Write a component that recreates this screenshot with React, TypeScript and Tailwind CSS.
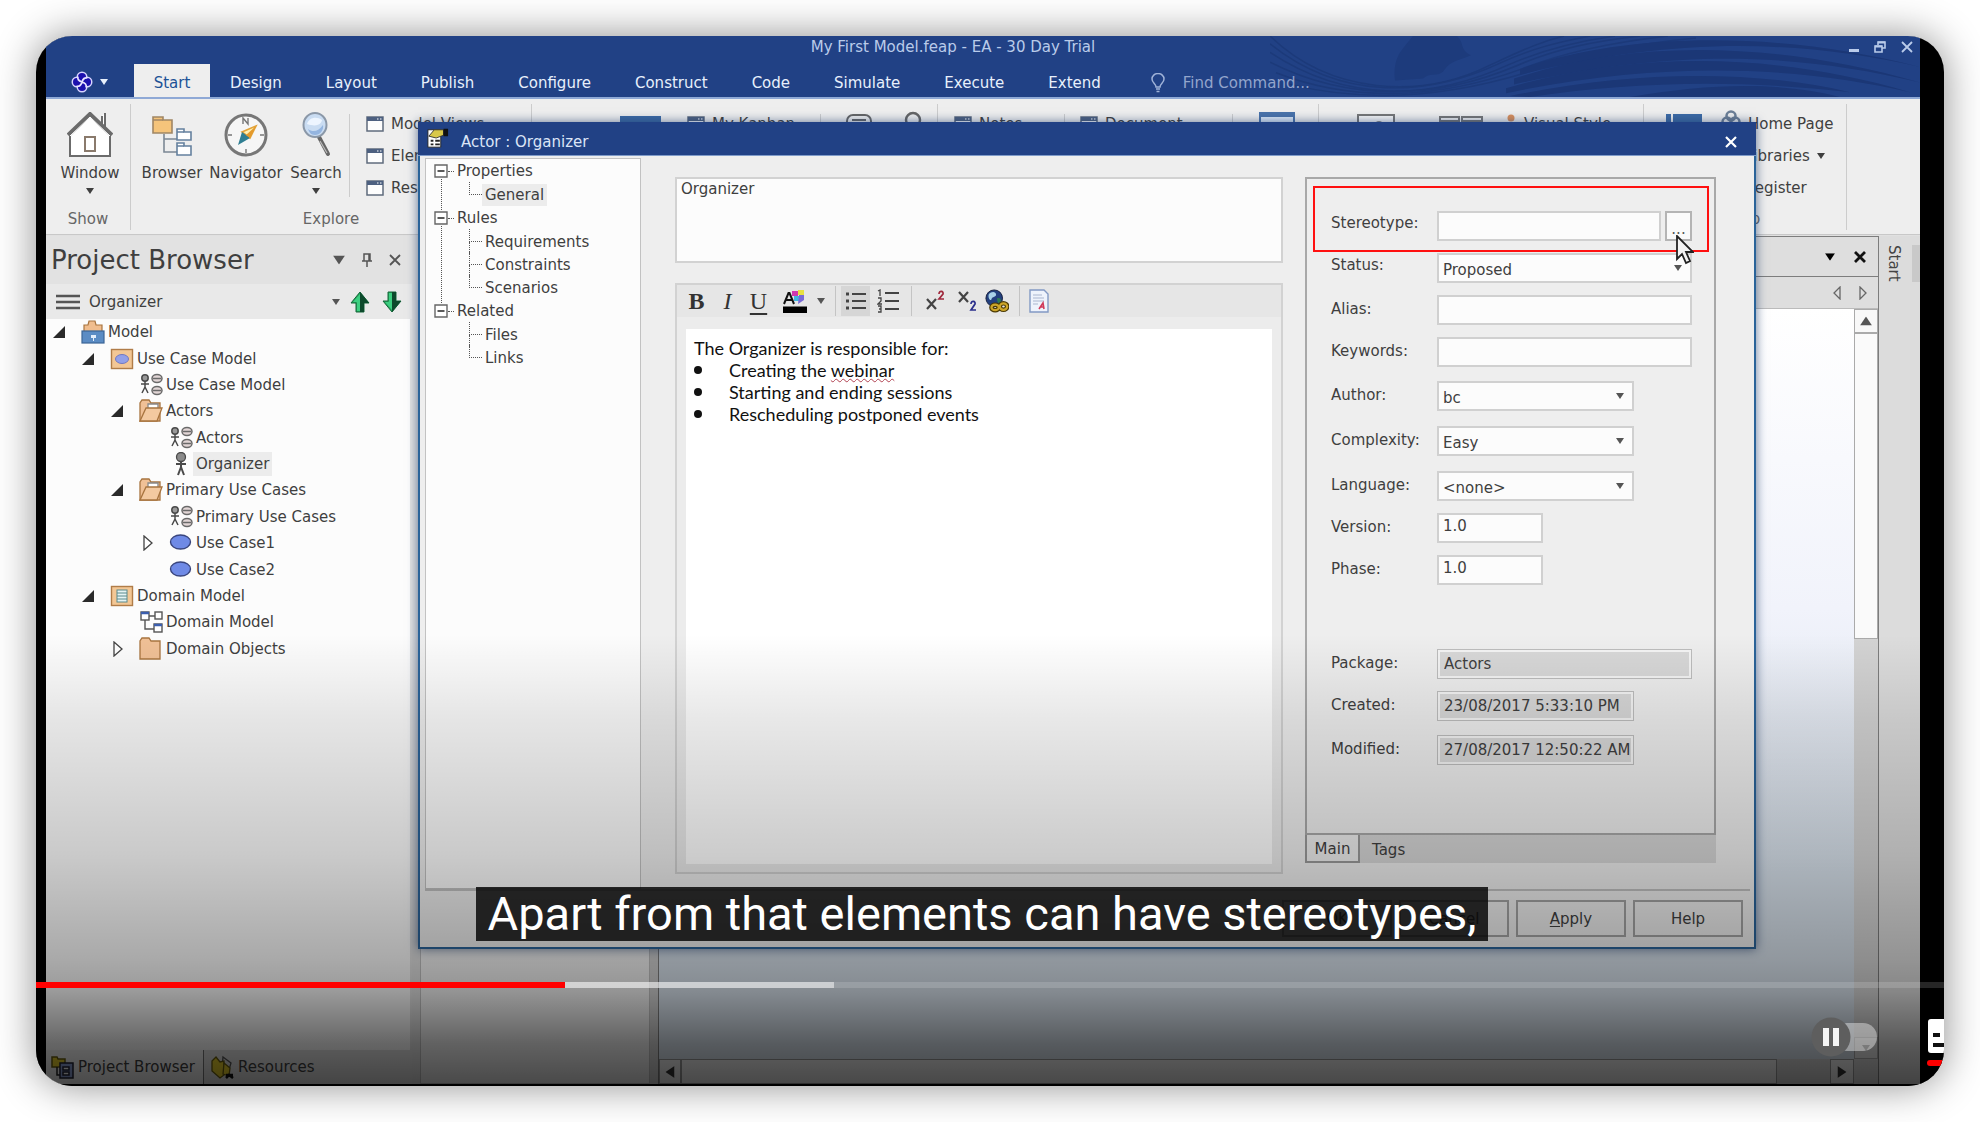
import React from "react";

/* ---------- small glyphs ---------- */

const Down = ({ className = "" }: { className?: string }) => (
  <svg viewBox="0 0 8 6" className={"h-[6px] w-[8px] shrink-0 " + className} fill="currentColor">
    <path d="M0 0h8L4 6z" />
  </svg>
);

const MiniWindow = () => (
  <svg viewBox="0 0 18 16" className="h-4 w-[18px] shrink-0">
    <rect x="1" y="1" width="16" height="14" fill="#fdfdfd" stroke="#5f6b7c" strokeWidth="1.5" />
    <rect x="1" y="1" width="16" height="4" fill="#4d6080" />
    <path d="M11 3h1.5M14 3h1.5" stroke="#fff" strokeWidth="1.2" />
  </svg>
);

const Logo = () => (
  <svg viewBox="0 0 24 24" className="h-6 w-6">
    <g fill="#d8d4ff">
      <circle cx="12" cy="7" r="5.500" />
      <circle cx="17" cy="12" r="5.500" />
      <circle cx="12" cy="17" r="5.500" />
      <circle cx="7" cy="12" r="5.500" />
    </g>
    <g fill="#1c0fae">
      <circle cx="12" cy="7" r="4" />
      <circle cx="17" cy="12" r="4" />
      <circle cx="12" cy="17" r="4" />
      <circle cx="7" cy="12" r="4" />
      <circle cx="12" cy="12" r="4" />
    </g>
    <path d="M8 6.500c-1 3 1 4.500 4 5.500s5 2.500 4 5.500M17.500 8c-3-1-4.500 1-5.500 4s-2.500 5-5.500 4" stroke="#e6e3ff" strokeWidth="1.700" fill="none" />
  </svg>
);

const House = () => (
  <svg viewBox="0 0 46 46" className="h-[46px] w-[46px]" stroke="#6b6b6b" strokeWidth="2">
    <path d="M38 1v18h-3V4" fill="#fff" />
    <path d="M3 23v21h40V23L23 4z" fill="#fff" />
    <path d="M1 23L23 2l22 21" fill="none" strokeWidth="4" />
    <path d="M3 24L23 5l20 19" fill="none" stroke="#fff" strokeWidth="1" />
    <rect x="18" y="25" width="10" height="14" fill="#fff" stroke="#8a7a6c" />
  </svg>
);

const BrowserIcon = () => (
  <svg viewBox="0 0 40 42" className="h-[42px] w-10" strokeWidth="1.6">
    <path d="M12 20v18h13M12 25h13" fill="none" stroke="#7b8794" />
    <path d="M1 3h10v3h9v13H1z" fill="#f5c47b" stroke="#a08664" />
    <path d="M1 6h10" stroke="#a08664" />
    <path d="M25 15h7v3h7v8H25zM25 29h7v3h7v9H25z" fill="#fff" stroke="#64809e" />
    <path d="M25 18h7M25 32h7" stroke="#64809e" />
  </svg>
);

const Compass = () => (
  <svg viewBox="0 0 44 44" className="h-11 w-11">
    <circle cx="22" cy="22" r="20" fill="#f6f6f6" stroke="#777" strokeWidth="3" />
    <path d="M19 11V5l5 6V5M22 36v4M4 22h4M36 22h4" stroke="#777" strokeWidth="1.4" fill="none" />
    <path d="M32 13L18 19l8 6z" fill="#fff0b0" stroke="#e2a33a" strokeWidth="1.6" />
    <path d="M14 32l4-13 8 6z" fill="#2f7e92" />
    <path d="M32 13l-10 9 4 3z" fill="#e59a2c" />
  </svg>
);

const Magnifier = () => (
  <svg viewBox="0 0 30 46" className="h-[46px] w-[30px]">
    <path d="M18 25l9 17" stroke="#666" strokeWidth="4" strokeLinecap="round" />
    <path d="M19 29l7 12" stroke="#bbb" strokeWidth="1.2" />
    <ellipse cx="14" cy="13" rx="11.500" ry="12" fill="#c9dcf2" stroke="#8b98a8" strokeWidth="2" />
    <path d="M6 12c2-7 10-8 15-4-1 5-6 7-15 4z" fill="#edf5ff" />
    <path d="M7 17c5 4 11 2 15-4 1 5-3 10-8 10-4 0-6-3-7-6z" fill="#94b5e0" />
  </svg>
);

const Waves = () => (
  <svg viewBox="0 0 650 63" preserveAspectRatio="none" className="absolute inset-y-0 right-0 h-full w-[650px]" fill="none">
    <path d="M125 46c-2-20 4-28 10-36l8-10h44c8 8 2 14 14 20-14 6-20 6-26 14-6 10-14 2-22 10z" fill="#1d3b7c" />
    <g stroke="#1c3a7a" strokeWidth="1.500">
      <path d="M0 0c60 60 150 66 220 30 34-16 50-24 74-30" />
      <path d="M0 8c70 58 155 56 230 20 34-16 60-22 90-28" />
      <path d="M0 17c76 52 160 50 240 12 36-16 70-24 105-29" />
      <path d="M0 27c80 42 168 38 246 4 40-18 80-26 124-31" />
      <path d="M6 38c80 32 166 26 246-4 44-18 94-28 146-34" />
      <path d="M20 50c80 20 160 12 236-12 60-20 110-30 170-36" />
    </g>
    <g fill="#1b3776">
      <path d="M250 34C350-2 500-8 650 32 520 2 400 2 250 40z" />
      <path d="M244 44C360 4 500 4 650 48 520 16 400 14 244 50z" />
      <path d="M236 54C370 14 510 18 640 58 520 30 390 26 236 59z" />
      <path d="M240 62c120-26 240-28 340-4-120-14-220-10-320 5z" />
      <path d="M360 63c80-14 150-16 210 0z" />
    </g>
  </svg>
);

/* ---------- tree icons ---------- */

const Folder = ({ open = false }: { open?: boolean }) => (
  <svg viewBox="0 0 24 24" className="h-6 w-6" stroke="#a8743f" strokeWidth="1.3">
    <path d="M1 22V4l2-3h7l2 3h9v18z" fill="#f0c096" />
    {open && <path d="M9 5h10v8H9z" fill="#fff" stroke="#888" />}
    {open && <path d="M1 22L7 9h16l-5 13z" fill="#f3c9a0" />}
  </svg>
);

const ModelIcon = () => (
  <svg viewBox="0 0 24 24" className="h-6 w-6" strokeWidth="1.2">
    <path d="M3 12V5h4l1-4h6l1 4h6v7z" fill="#f0bd8e" stroke="#a8743f" />
    <rect x="1" y="11" width="22" height="12" fill="#5b8cc4" stroke="#3b6596" />
    <path d="M10 15h5v3h-2v3h-1v-3h-2z" fill="#e3eefb" />
  </svg>
);

const PackageIcon = ({ kind }: { kind: "use" | "class" }) => (
  <svg viewBox="0 0 24 24" className="h-6 w-6">
    <rect x="1.500" y="2.500" width="21" height="19" fill="#f3c795" stroke="#b07c48" strokeWidth="1.4" />
    {kind === "use" ? (
      <ellipse cx="12" cy="12" rx="6.500" ry="4.500" fill="#93a0e8" stroke="#7379c0" />
    ) : (
      <g stroke="#5a8a8c">
        <rect x="7" y="6" width="10" height="12" fill="#e5f3f3" />
        <path d="M7 9h10M7 12h10M7 15h10" />
      </g>
    )}
  </svg>
);

const DiagramIcon = () => (
  <svg viewBox="0 0 24 24" className="h-6 w-6" stroke="#4a4a4a" strokeWidth="1.5">
    <circle cx="6" cy="5" r="3.200" fill="#999" />
    <path d="M6 8v7M2 11h8M6 14l-3 6M6 14l3 6" fill="none" />
    <g fill="#e2d6d6" stroke="#6a6a6a">
      <ellipse cx="18" cy="5.500" rx="5" ry="4" />
      <ellipse cx="18" cy="17.500" rx="5" ry="4" />
      <path d="M14 5.500h8M14 17.500h8" />
    </g>
  </svg>
);

const ActorIcon = () => (
  <svg viewBox="0 0 24 24" className="h-6 w-6" stroke="#4a4a4a" strokeWidth="2">
    <circle cx="12" cy="5" r="4.500" fill="#8a8a8a" strokeWidth="1.300" />
    <path d="M12 9v7M7 12h10M12 15l-3 8M12 15l3 8" fill="none" />
  </svg>
);

const UseCaseIcon = () => (
  <svg viewBox="0 0 24 24" className="h-6 w-6">
    <ellipse cx="11.500" cy="11" rx="10" ry="7" fill="#6f8ae6" stroke="#39457e" strokeWidth="1.4" />
  </svg>
);

const ClassDiagramIcon = () => (
  <svg viewBox="0 0 24 24" className="h-6 w-6" stroke="#555" strokeWidth="1.400" fill="#fff">
    <path d="M6 8v11h9M10 6h6" fill="none" />
    <rect x="2" y="2" width="8" height="8" />
    <rect x="16" y="2" width="7" height="7" />
    <rect x="15" y="14" width="8" height="8" />
    <path d="M2 3h8M15 15h8" stroke="#3c5fae" strokeWidth="2.500" />
  </svg>
);

type Node = { level: 0 | 1 | 2 | 3; state?: "open" | "closed"; icon: React.ReactNode; text: string; selected?: boolean };

const nodes: Node[] = [
  { level: 0, state: "open", icon: <ModelIcon />, text: "Model" },
  { level: 1, state: "open", icon: <PackageIcon kind="use" />, text: "Use Case Model" },
  { level: 2, icon: <DiagramIcon />, text: "Use Case Model" },
  { level: 2, state: "open", icon: <Folder open />, text: "Actors" },
  { level: 3, icon: <DiagramIcon />, text: "Actors" },
  { level: 3, icon: <ActorIcon />, text: "Organizer", selected: true },
  { level: 2, state: "open", icon: <Folder open />, text: "Primary Use Cases" },
  { level: 3, icon: <DiagramIcon />, text: "Primary Use Cases" },
  { level: 3, state: "closed", icon: <UseCaseIcon />, text: "Use Case1" },
  { level: 3, icon: <UseCaseIcon />, text: "Use Case2" },
  { level: 1, state: "open", icon: <PackageIcon kind="class" />, text: "Domain Model" },
  { level: 2, icon: <ClassDiagramIcon />, text: "Domain Model" },
  { level: 2, state: "closed", icon: <Folder />, text: "Domain Objects" },
];

const indents = ["pl-[7px]", "pl-[36px]", "pl-[65px]", "pl-[95px]"];

/* ---------- application header ---------- */

const tabs = ["Design", "Layout", "Publish", "Configure", "Construct", "Code", "Simulate", "Execute", "Extend"];

const Header = () => (
  <header className="relative h-[63px] shrink-0 overflow-hidden border-b-2 border-[#8fa9d6] bg-[#214185]">
    <Waves />
    <div className="relative flex h-7 items-start text-[#b9cbea]">
      <h1 className="flex-1 pl-5 text-center leading-[22px]">My First Model.feap - EA - 30 Day Trial</h1>
      <div className="flex h-[22px] w-20 items-center justify-between pr-[7px] pl-[9px]">
        <button aria-label="Minimize">
          <svg viewBox="0 0 10 12" className="h-3 w-[10px]"><path d="M0 9.500h10" stroke="currentColor" strokeWidth="3" /></svg>
        </button>
        <button aria-label="Restore">
          <svg viewBox="0 0 12 12" className="h-3 w-3" fill="none" stroke="currentColor" strokeWidth="1.600">
            <path d="M4 4V1h7v6H8M1 5h7v6H1z" /><path d="M4 1.500h7M1 5.500h7" strokeWidth="2.200" />
          </svg>
        </button>
        <button aria-label="Close">
          <svg viewBox="0 0 12 12" className="h-3 w-3"><path d="M1 1l10 10M11 1L1 11" stroke="currentColor" strokeWidth="1.800" /></svg>
        </button>
      </div>
    </div>
    <nav className="relative flex h-[35px] items-center text-[#e8f0fc]">
      <button className="flex w-[88px] items-center gap-[6px] pl-6" aria-label="Application menu">
        <Logo />
        <Down />
      </button>
      <button className="mr-[-2px] h-full w-[76px] bg-[#eeeeee] pt-[2px] text-[#1d5296]">Start</button>
      {tabs.map((t) => (
        <button key={t} className="px-[22px] pt-[2px]">{t}</button>
      ))}
      <div className="flex items-center pt-[2px] pl-7 text-[#9fb2d8]">
        <svg viewBox="0 0 14 20" className="h-5 w-[14px]" fill="none" stroke="currentColor" strokeWidth="1.500">
          <path d="M5 14c0-3-4-4-4-8a6 5.500 0 0 1 12 0c0 4-4 5-4 8zM5 16h4M5.500 18.500h3" />
        </svg>
        <input aria-label="Find Command" placeholder="Find Command..." className="ml-[18px] w-36 bg-transparent outline-none placeholder:text-[#93a5cc]" />
      </div>
    </nav>
  </header>
);

/* ---------- ribbon ---------- */

const BigButton = ({ icon, label, arrow, width }: { icon: React.ReactNode; label: string; arrow?: boolean; width: string }) => (
  <button className={"flex flex-col items-center " + width}>
    <span className="flex h-[46px] items-center">{icon}</span>
    <span className="leading-[30px]">{label}</span>
    {arrow && <Down />}
  </button>
);

const SmallButton = ({ label, icon, arrow }: { label: string; icon?: React.ReactNode; arrow?: boolean }) => (
  <button className="flex h-8 items-center gap-[7px] whitespace-nowrap">
    {icon ?? <MiniWindow />}
    {label}
    {arrow && <Down />}
  </button>
);

const Ribbon = () => (
  <section className="flex h-[136px] shrink-0 overflow-hidden border-b border-[#c8c8c8] bg-[#eeeeee] pt-[5px] pb-1 text-[#3f3f3f]">
    <div className="flex w-[85px] shrink-0 flex-col items-center justify-between border-r border-[#cccccc] pt-2">
      <BigButton icon={<House />} label="Window" arrow width="w-[76px] pl-1" />
      <span className="leading-[22px] text-[#666]">Show</span>
    </div>
    <div className="flex w-[401px] shrink-0 flex-col justify-between border-r border-[#cccccc] pt-2">
      <div className="flex">
        <BigButton icon={<BrowserIcon />} label="Browser" width="ml-1 w-[74px]" />
        <BigButton icon={<Compass />} label="Navigator" width="w-[74px]" />
        <BigButton icon={<Magnifier />} label="Search" arrow width="w-[66px]" />
        <div className="mt-[2px] h-[83px] border-l border-[#cccccc]" />
        <div className="-mt-1 ml-4 flex flex-col">
          <SmallButton label="Model Views" />
          <SmallButton label="Element" />
          <SmallButton label="Resources" />
        </div>
      </div>
      <span className="text-center leading-[22px] text-[#666]">Explore</span>
    </div>
    <div className="flex w-[406px] shrink-0 border-r border-[#cccccc] pt-[10px]">
      <svg viewBox="0 0 43 30" className="mt-2 ml-[17px] h-[30px] w-[43px]"><path d="M0 0h43v30H0z" fill="#55606f" /></svg>
      <svg viewBox="0 0 41 30" className="mt-[2px] ml-7 h-[30px] w-[41px]"><path d="M0 0h41v30H0z" fill="#3d6aa5" /></svg>
      <div className="-mt-[6px] ml-[26px] w-[133px]"><SmallButton label="My Kanban" /></div>
      <div className="h-20 border-l border-[#cccccc]" />
      <svg viewBox="0 0 26 30" className="ml-[25px] h-[30px] w-[26px]" fill="none" stroke="#666" strokeWidth="2"><rect x="1" y="1" width="24" height="20" rx="6" /><path d="M6 6h14M6 10h10" /></svg>
      <svg viewBox="0 0 18 30" className="-mt-[3px] ml-8 h-[30px] w-[18px]" fill="none" stroke="#666" strokeWidth="2.500"><circle cx="9" cy="9" r="7" /></svg>
    </div>
    <div className="flex w-[381px] shrink-0 border-r border-[#cccccc] pt-[10px]">
      <div className="-mt-[6px] ml-4 w-[110px]"><SmallButton label="Notes" /></div>
      <div className="h-20 border-l border-[#cccccc]" />
      <div className="-mt-[6px] ml-[15px] w-[152px]"><SmallButton label="Document" /></div>
      <div className="h-20 border-l border-[#cccccc]" />
      <svg viewBox="0 0 36 30" className="-mt-[2px] ml-[26px] h-[30px] w-9"><path d="M1 1h34v28H1z" fill="#dbe8f8" stroke="#4a73aa" strokeWidth="2" /><path d="M0 0h36v5H0z" fill="#4a73aa" /></svg>
    </div>
    <div className="flex w-[325px] shrink-0 border-r border-[#cccccc] pt-[10px]">
      <svg viewBox="0 0 38 30" className="ml-[38px] h-[30px] w-[38px]"><path d="M1 1h36v28H1z" fill="#f7f7f7" stroke="#777" strokeWidth="2" /><circle cx="22" cy="11" r="4" fill="#888" /></svg>
      <svg viewBox="0 0 44 30" className="mt-[2px] ml-11 h-[30px] w-11" fill="#eee" stroke="#777" strokeWidth="2"><path d="M1 1h19v28H1zM23 1h20v28H23zM1 5h19M23 5h20" /></svg>
      <svg viewBox="0 0 14 22" className="ml-[19px] h-[22px] w-[14px]" fill="#d98f5c"><circle cx="9" cy="4" r="3.500" /><circle cx="3" cy="12" r="2" /></svg>
      <span className="ml-2 whitespace-nowrap">Visual Style</span>
    </div>
    <div className="flex w-[203px] shrink-0 border-r border-[#cccccc]">
      <svg viewBox="0 0 36 40" className="mt-[10px] ml-[22px] h-10 w-9"><path d="M0 0h5v40H0zM7 0h29v40H7z" fill="#3d6aa5" /></svg>
      <div className="ml-[19px] flex flex-col pt-1">
        <SmallButton
          label="Home Page"
          icon={<svg viewBox="0 0 20 20" className="-mt-2 h-5 w-5" fill="none" stroke="#6d7f96" strokeWidth="2.500"><circle cx="10" cy="6" r="4.500" /><circle cx="6" cy="12" r="4.500" /><circle cx="14" cy="12" r="4.500" /></svg>}
        />
        <SmallButton label="Libraries" arrow icon={<span className="w-[17px]" />} />
        <SmallButton label="Register" icon={<span className="w-[17px]" />} />
        <span className="mt-1 pl-[5px] leading-[22px] text-[#666]">Help</span>
      </div>
    </div>
  </section>
);

/* ---------- project browser ---------- */

const Arrow = ({ up }: { up?: boolean }) => (
  <svg viewBox="0 0 20 22" className="h-[22px] w-5">
    <g transform={up ? undefined : "rotate(180 10 11)"}>
      <path d="M10 1l9 11h-5v9H6v-9H1z" fill="#25a05a" stroke="#14683a" />
      <path d={up ? "M10 1v20h4v-9h5z" : "M10 1v20H6v-9H1z"} fill="#0d4a2c" />
      <path d={up ? "M10 3v17H7v-9H3z" : "M10 3v17h3v-9h4z"} fill="#3ccf80" />
    </g>
  </svg>
);

const ProjectBrowser = () => (
  <aside className="flex w-[366px] shrink-0 flex-col bg-[#e2e2e2] text-[#3f3f3f]">
    <div className="flex h-12 items-center pr-[11px] pl-[5px]">
      <h2 className="flex-1 text-[26px] leading-8">Project Browser</h2>
      <button aria-label="Panel menu" className="text-[#555]"><Down className="scale-150" /></button>
      <button aria-label="Pin" className="ml-[18px]">
        <svg viewBox="0 0 12 14" className="h-[14px] w-3" fill="none" stroke="#555" strokeWidth="1.500"><path d="M3 8V1h6v7M1 8h10M6 8v6M8 1v7" /></svg>
      </button>
      <button aria-label="Close panel" className="ml-4">
        <svg viewBox="0 0 12 12" className="h-3 w-3"><path d="M1 1l10 10M11 1L1 11" stroke="#555" strokeWidth="1.800" /></svg>
      </button>
    </div>
    <div className="flex h-[35px] items-center bg-[#e9e9e9] pr-[10px] pl-[10px]">
      <svg viewBox="0 0 24 16" className="h-4 w-6"><path d="M0 2h24M0 8h24M0 14h24" stroke="#555" strokeWidth="2.500" /></svg>
      <span className="ml-[9px] flex-1">Organizer</span>
      <Down className="text-[#555]" />
      <button aria-label="Up" className="ml-[10px]"><Arrow up /></button>
      <button aria-label="Down" className="ml-3"><Arrow /></button>
    </div>
    <div className="mr-[2px] flex-1 bg-[#fcfcfc]">
      <ul className="grid h-[343px] auto-rows-fr">
        {nodes.map((n, i) => (
          <li key={i} className={"flex items-center " + indents[n.level]}>
            <span className="w-7 shrink-0">
              {n.state === "open" && <svg viewBox="0 0 12 12" className="h-3 w-3"><path d="M12 0v12H0z" fill="#2a2a2a" /></svg>}
              {n.state === "closed" && <svg viewBox="0 0 10 16" className="ml-[2px] h-4 w-[10px]"><path d="M1 1l8 7-8 7z" fill="#fff" stroke="#444" strokeWidth="1.300" /></svg>}
            </span>
            {n.icon}
            <span className={n.selected ? "bg-[#ececec] px-[3px] leading-6" : "pl-[3px] leading-6"}>{n.text}</span>
          </li>
        ))}
      </ul>
    </div>
    <div className="flex h-[34px] items-stretch">
      <button className="flex w-[158px] items-center gap-[3px] border-r border-[#777] bg-[#f4f4f4] pl-[5px] whitespace-nowrap">
        <svg viewBox="0 0 24 24" className="h-6 w-6" strokeWidth="1.500"><path d="M1 2h5l1 2h7v8H1z" fill="#e8d02c" stroke="#6b5f10" /><path d="M6 12v8h6" fill="none" stroke="#222" /><path d="M9 8h13v15H9z" fill="#8fa2d8" stroke="#223" /><path d="M12 12h6v3h-6zM12 17h6v3h-6z" fill="#fff" stroke="#223" /></svg>
        Project Browser
      </button>
      <button className="flex items-center gap-[3px] pl-[7px]">
        <svg viewBox="0 0 24 24" className="h-6 w-6" strokeWidth="1.300"><path d="M12 2l8 6-3 10-6-4z" fill="#ddd" stroke="#555" /><path d="M1 6l4-4 4 5 4-1v14l-4 3-8-7z" fill="#e8d02c" stroke="#6b5f10" /><path d="M13 8l6 5-1 8-6-2z" fill="#e8d02c" stroke="#6b5f10" /><path d="M15 20h7M15 23l3-3 4 3" stroke="#111" strokeWidth="2.500" fill="none" /></svg>
        Resources
      </button>
    </div>
  </aside>
);

/* ---------- diagram workspace ---------- */

const Workspace = () => (
  <main className="flex min-w-0 flex-1 flex-col border-x border-t border-[#7d7d7d] bg-[#dedede]">
    <div className="flex h-10 items-center justify-end gap-5 border-b border-[#7d7d7d] pr-3 text-black">
      <Down className="scale-125" />
      <button aria-label="Close diagram"><svg viewBox="0 0 12 12" className="h-3 w-3"><path d="M1 1l10 10M11 1L1 11" stroke="#111" strokeWidth="2.800" /></svg></button>
    </div>
    <div className="flex h-8 items-center justify-end gap-[18px] border-b border-[#bbb] pr-[11px]">
      <svg viewBox="0 0 8 14" className="h-[14px] w-2"><path d="M7 1v12L1 7z" fill="none" stroke="#666" strokeWidth="1.300" /></svg>
      <svg viewBox="0 0 8 14" className="h-[14px] w-2"><path d="M1 1v12l6-6z" fill="none" stroke="#666" strokeWidth="1.300" /></svg>
    </div>
    <div className="flex flex-1">
      <div className="flex-1 bg-linear-to-b from-white via-[#f1f3fb] via-40% to-[#d8e2ec] to-75%" />
      <div className="flex w-6 flex-col bg-[#d3d3d3]">
        <span className="flex h-6 items-center justify-center border border-[#aaa] bg-[#f8f8f8] text-[#555]"><Down className="rotate-180 scale-150" /></span>
        <span className="h-[306px] border border-[#aaa] bg-[#fafafa]" />
        <span className="flex-1" />
        <span className="flex h-[22px] items-center justify-center border border-[#aaa] bg-[#e2e2e2] text-[#555]"><Down /></span>
      </div>
    </div>
    <div className="flex h-[25px] bg-[#d3d3d3] text-[#333]">
      <span className="flex w-[22px] items-center justify-center border border-[#999] bg-[#eee]"><Down className="rotate-90 scale-150" /></span>
      <span className="flex-1 border border-[#999] bg-[#eee]" />
      <span className="w-[53px]" />
      <span className="flex w-6 items-center justify-center border border-[#999] bg-[#eee]"><Down className="-rotate-90 scale-150" /></span>
      <span className="w-6" />
    </div>
  </main>
);

/* ---------- properties dialog ---------- */

const sections = [
  { name: "Properties", items: ["General"] },
  { name: "Rules", items: ["Requirements", "Constraints", "Scenarios"] },
  { name: "Related", items: ["Files", "Links"] },
];

const SectionTree = () => (
  <nav className="w-[216px] shrink-0 border border-[#c2c2c2] bg-[#fcfcfc] pl-2">
    <ul>
      {sections.map((s, i) => (
        <li key={s.name} className="relative">
          {i < 2 && <span className="absolute top-5 -bottom-1 left-[7px] border-l border-dotted border-[#555]" />}
          <div className="flex h-6 items-center">
            <svg viewBox="0 0 14 14" className="h-[14px] w-[14px]"><path d="M1 1h12v12H1z" fill="#fff" stroke="#666" strokeWidth="1.400" /><path d="M3.500 7h7" stroke="#222" strokeWidth="1.500" /></svg>
            <span className="mr-[3px] w-[6px] border-t border-dotted border-[#555]" />
            {s.name}
          </div>
          <ul>
            {s.items.map((item) => (
              <li key={item} className="relative flex h-[23px] items-center pl-[35px]">
                <span className="absolute -top-[1px] left-[35px] h-[13px] border-l border-dotted border-[#555]" />
                {item !== s.items[s.items.length - 1] && <span className="absolute top-3 left-[35px] h-3 border-l border-dotted border-[#555]" />}
                <span className="w-[13px] border-t border-dotted border-[#555]" />
                <button className={item === "General" ? "bg-[#ececec] px-[3px] leading-[22px]" : "px-[3px] leading-[22px]"}>{item}</button>
              </li>
            ))}
          </ul>
        </li>
      ))}
    </ul>
  </nav>
);

const Sep = () => <span className="h-[30px] border-l border-[#c4c4c4]" />;

const Toolbar = () => (
  <div className="flex h-8 items-center bg-[#e6e6e6] text-[#333]">
    <button className="w-[31px] pl-2 font-['Liberation_Serif'] text-[24px] font-bold">B</button>
    <button className="w-[31px] pl-2 font-['Liberation_Serif'] text-[24px] italic">I</button>
    <button className="w-[31px] pl-2 font-['Liberation_Serif'] text-[24px] underline underline-offset-4">U</button>
    <button aria-label="Text colour" className="ml-[13px]">
      <svg viewBox="0 0 24 24" className="h-6 w-6">
        <path d="M1 15L5.500 4h1L11 15M3 11h6" stroke="#111" strokeWidth="2" fill="none" />
        <path d="M9 2h6v5H9z" fill="#d03ab0" /><path d="M15 1h6v5h-6z" fill="#e8e040" /><path d="M11 7h5v5h-5z" fill="#40b8e0" /><path d="M16 6h5v5l-6 4z" fill="#7a6ad8" />
        <path d="M0 17.500h24V24H0z" fill="#000" />
      </svg>
    </button>
    <Down className="mr-[10px] ml-[10px] text-[#555]" />
    <Sep />
    <button aria-label="Bulleted list" className="ml-[5px] flex h-[30px] w-[29px] items-center justify-center bg-[#d6d6d6]">
      <svg viewBox="0 0 22 20" className="h-5 w-[22px]" stroke="#444" strokeWidth="1.800"><path d="M7 3h14M7 10h14M7 17h14" /><path d="M1 3h3M1 10h3M1 17h3" strokeWidth="3" /></svg>
    </button>
    <button aria-label="Numbered list" className="mr-3 ml-[7px]">
      <svg viewBox="0 0 22 24" className="h-6 w-[22px]" stroke="#444" strokeWidth="1.500" fill="none"><path d="M8 4h14M8 12h14M8 20h14" strokeWidth="1.800" /><path d="M1 2l2-1v6M1 9h3v3l-3 3h4M1 17h3v6H1M2 20h2" strokeWidth="1.300" /></svg>
    </button>
    <Sep />
    <button aria-label="Superscript" className="ml-[14px]">
      <svg viewBox="0 0 20 22" className="h-[22px] w-5" fill="none" strokeWidth="2.200"><path d="M1 9l9 10M10 9L1 19" stroke="#444" /><path d="M13 4c0-4 5-3 4 0l-4 5h5" stroke="#a0283c" strokeWidth="1.700" /></svg>
    </button>
    <button aria-label="Subscript" className="ml-3">
      <svg viewBox="0 0 20 22" className="h-[22px] w-5" fill="none" strokeWidth="2.200"><path d="M1 2l9 10M10 2L1 12" stroke="#444" /><path d="M13 14c0-4 5-3 4 0l-4 6h5" stroke="#2b2f8c" strokeWidth="1.700" /></svg>
    </button>
    <button aria-label="Hyperlink" className="ml-[7px]">
      <svg viewBox="0 0 26 26" className="h-6 w-6">
        <circle cx="10" cy="10" r="9" fill="#23407e" stroke="#151d3a" /><path d="M4 6c3-4 8-3 8 0s-4 2-5 5-4-1-3-5z" fill="#a9d2e8" /><path d="M13 10c3-1 5 1 4 4s-4 2-4-4z" fill="#2c7a58" />
        <g fill="none" stroke="#4b3a05" strokeWidth="5"><ellipse cx="11" cy="20" rx="4" ry="3" /><ellipse cx="20" cy="19" rx="4" ry="3.500" /></g>
        <g fill="none" stroke="#cda62a" strokeWidth="2.400"><ellipse cx="11" cy="20" rx="4" ry="3" /><ellipse cx="20" cy="19" rx="4" ry="3.500" /></g>
      </svg>
    </button>
    <span className="w-[10px]" />
    <Sep />
    <button aria-label="Insert template" className="ml-[9px]">
      <svg viewBox="0 0 20 24" className="h-6 w-5"><path d="M1 1h14l4 4v18H1z" fill="#eef3fc" stroke="#8299c4" strokeWidth="1.400" /><path d="M4 6h9M4 9h11M4 12h11M4 15h5" stroke="#aab6cf" /><path d="M10 20l4-6 1 6M11 18h4" stroke="#d03a5a" strokeWidth="1.600" fill="none" /></svg>
    </button>
  </div>
);

const bullets: React.ReactNode[] = [
  <>Creating the <span className="underline decoration-[#b04050] decoration-wavy decoration-1 underline-offset-1">webinar</span></>,
  "Starting and ending sessions",
  "Rescheduling postponed events",
];

const Editor = () => (
  <section className="flex w-[608px] flex-col">
    <textarea aria-label="Name" defaultValue="Organizer" className="block h-[86px] w-full resize-none border-2 border-[#d2d2d2] bg-[#fcfcfc] px-1 pt-[1px] leading-[18px] outline-none" />
    <div className="mt-5 flex flex-1 flex-col border-2 border-[#d2d2d2] bg-[#ececec]">
      <Toolbar />
      <div className="mx-[9px] mt-3 mb-2 flex-1 bg-white px-2 pt-2 font-[Lato] text-[18px] leading-[22px] text-[#111]">
        <p>The Organizer is responsible for:</p>
        <ul>
          {bullets.map((b, i) => (
            <li key={i} className="flex items-center">
              <span className="mr-[27px] h-2 w-2 rounded-full bg-[#111]" />
              <span>{b}</span>
            </li>
          ))}
        </ul>
      </div>
    </div>
  </section>
);

type Field = { label: string; value: string; kind: "text" | "select" | "readonly"; width: string; gap: string };

const fields: Field[] = [
  { label: "Status", value: "Proposed", kind: "select", width: "w-[255px]", gap: "mt-3" },
  { label: "Alias", value: "", kind: "text", width: "w-[255px]", gap: "mt-3" },
  { label: "Keywords", value: "", kind: "text", width: "w-[255px]", gap: "mt-3" },
  { label: "Author", value: "bc", kind: "select", width: "w-[197px]", gap: "mt-[14px]" },
  { label: "Complexity", value: "Easy", kind: "select", width: "w-[197px]", gap: "mt-[15px]" },
  { label: "Language", value: "<none>", kind: "select", width: "w-[197px]", gap: "mt-[15px]" },
  { label: "Version", value: "1.0", kind: "text", width: "w-[106px]", gap: "mt-3" },
  { label: "Phase", value: "1.0", kind: "text", width: "w-[106px]", gap: "mt-3" },
  { label: "Package", value: "Actors", kind: "readonly", width: "w-[255px]", gap: "mt-[64px]" },
  { label: "Created", value: "23/08/2017 5:33:10 PM", kind: "readonly", width: "w-[197px]", gap: "mt-3" },
  { label: "Modified", value: "27/08/2017 12:50:22 AM", kind: "readonly", width: "w-[197px]", gap: "mt-[14px]" },
];

const FieldRow = ({ f }: { f: Field }) => (
  <div className={"flex h-[30px] " + f.gap}>
    <label htmlFor={f.label} className={f.label === "Status" ? "w-[106px] leading-6" : "w-[106px] leading-7"}>{f.label}:</label>
    {f.kind === "select" && (
      <span className={"relative " + f.width}>
        <select id={f.label} className="h-full w-full appearance-none border-2 border-[#d0d0d0] bg-[#fcfcfc] px-1 pt-[3px] outline-none">
          <option>{f.value}</option>
        </select>
        <Down className="pointer-events-none absolute top-3 right-[10px] text-[#555]" />
      </span>
    )}
    {f.kind === "text" && <input id={f.label} defaultValue={f.value} className={"border-2 border-[#d0d0d0] bg-[#fcfcfc] px-1 pb-1 outline-none " + f.width} />}
    {f.kind === "readonly" && (
      <span className={"border border-[#bdbdbd] bg-[#f4f4f4] p-[2px] " + f.width}>
        <input id={f.label} readOnly value={f.value} className="h-full w-full bg-[#d8d8d8] pl-1 outline-none" />
      </span>
    )}
  </div>
);

const Cursor = () => (
  <svg viewBox="0 0 18 30" className="absolute top-[56px] left-[369px] h-[30px] w-[18px]">
    <path d="M1 1v23l5-5 4 9 4-2-4-9h7z" fill="#f4f4f4" stroke="#222" strokeWidth="1.800" />
  </svg>
);

const PropertyTabs = () => (
  <section className="ml-[22px] flex w-[411px] flex-col pb-[11px]">
    <div className="relative flex-1 border-2 border-[#a8a8a8] bg-[#eeeeee] pt-8 pl-6">
      <div className="flex h-[30px]">
        <label htmlFor="Stereotype" className="w-[106px] leading-6">Stereotype:</label>
        <input id="Stereotype" className="w-[224px] border-2 border-[#d0d0d0] bg-[#fcfcfc] outline-none" />
        <button aria-label="Choose stereotype" className="ml-1 flex w-[27px] items-end justify-center border-2 border-[#b4b4b4] bg-[#fafafa] text-[#555]">
          <span className="leading-5">...</span>
        </button>
      </div>
      {fields.map((f) => <FieldRow key={f.label} f={f} />)}
      <div className="pointer-events-none absolute top-[7px] left-[6px] h-[66px] w-[396px] border-2 border-[#ff1010]" />
      <Cursor />
    </div>
    <div className="flex h-7 bg-[#d6d6d6]">
      <button className="-mt-[2px] w-[55px] border-2 border-t-0 border-[#999] bg-[#eeeeee] pt-1">Main</button>
      <button className="px-3 pt-[2px]">Tags</button>
    </div>
  </section>
);

const DialogButton = ({ children }: { children: React.ReactNode }) => (
  <button className="h-[37px] w-[110px] border-2 border-[#a2a2a2] bg-[#eeeeee]">{children}</button>
);

const Dialog = () => (
  <div
    role="dialog"
    aria-label="Actor : Organizer"
    className="absolute top-[86px] right-[188px] bottom-[137px] left-[382px] flex flex-col border-2 border-[#2a6399] bg-[#eeeeee] text-[#3f3f3f] shadow-[0_0_10px_rgba(20,50,100,0.65)]"
  >
    <div className="-m-[2px] mb-0 flex h-[34px] shrink-0 items-center border-b border-[#7f9bc9] bg-[#214185] pt-[6px] pr-[19px] pl-2 text-[#dbe5f7]">
      <svg viewBox="0 0 24 24" className="-mt-2 h-[22px] w-6"><path d="M1 3h14v19H1z" fill="#fff" stroke="#222" /><path d="M4 15h3M9 15h5M4 19h3M9 19h5" stroke="#222" strokeWidth="2" /><path d="M2 10l6-7h10v6l-8 3z" fill="#d8c84a" stroke="#333" /><path d="M18 2h5v8h-5z" fill="#111" /></svg>
      <span className="ml-[11px] flex-1">Actor : Organizer</span>
      <button aria-label="Close dialog">
        <svg viewBox="0 0 12 12" className="h-3 w-3"><path d="M1 1l10 10M11 1L1 11" stroke="#fff" strokeWidth="2.200" /></svg>
      </button>
    </div>
    <div className="flex flex-1 pt-[2px] pl-[5px]">
      <SectionTree />
      <div className="flex pt-[19px] pb-[15px] pl-[34px]">
        <Editor />
        <PropertyTabs />
      </div>
    </div>
    <div className="mr-1 ml-[5px] flex h-[58px] items-start justify-end gap-[7px] border-t-2 border-[#c0c0c0] pt-[9px] pr-[7px]">
      <DialogButton>OK</DialogButton>
      <DialogButton>Cancel</DialogButton>
      <DialogButton><span className="underline underline-offset-2">A</span>pply</DialogButton>
      <DialogButton>Help</DialogButton>
    </div>
  </div>
);

/* ---------- video player layer ---------- */

const PlayerControls = () => (
  <>
    <div className="pointer-events-none absolute inset-0 bg-[linear-gradient(to_bottom,transparent_57%,rgba(0,0,0,0.09)_65%,rgba(0,0,0,0.2)_78%,rgba(0,0,0,0.33)_88%,rgba(0,0,0,0.39)_91%,rgba(0,0,0,0.6)_96%,rgba(0,0,0,0.7)_100%)]" />
    <div className="absolute inset-x-0 bottom-[145px] flex justify-center">
      <p className="mr-4 bg-[rgba(8,8,8,0.85)] px-3 font-[Roboto] text-[47px] leading-[54px] whitespace-nowrap text-white">
        Apart from that elements can have stereotypes,
      </p>
    </div>
    <div role="progressbar" aria-label="Playback" aria-valuenow={28} className="absolute inset-x-0 bottom-[98px] flex h-[6px] bg-white/15">
      <span className="w-[27.7%] bg-[#ff0000]" />
      <span className="w-[14.1%] bg-white/50" />
    </div>
    <button aria-label="Autoplay" className="absolute right-[67px] bottom-[29px] flex h-10 w-[66px] items-center">
      <span className="absolute right-0 h-7 w-11 rounded-full bg-white/40" />
      <svg viewBox="0 0 40 40" className="relative h-10 w-10"><circle cx="20" cy="20" r="19.500" fill="#5e5e5e" /><path d="M12 11h6v18h-6zM22 11h6v18h-6z" fill="#f4f4f4" /></svg>
    </button>
    <button aria-label="Subtitles" className="absolute right-0 bottom-5 h-[47px] w-[18px]">
      <svg viewBox="0 0 18 47" className="h-full w-full">
        <path d="M18 0H5a3 3 0 0 0-3 3v28a3 3 0 0 0 3 3h13z" fill="#fff" />
        <path d="M7 14h7v4H7zM7 24h11v4H7z" fill="#111" />
        <path d="M18 41H4a3 3 0 0 0 0 6h12z" fill="#f00" />
      </svg>
    </button>
  </>
);

export default function App() {
  return (
    <div className="flex min-h-screen bg-white p-9 font-['DejaVu_Sans',sans-serif] text-[15px] leading-5">
      <div className="relative flex flex-1 overflow-hidden rounded-[36px] bg-black pr-6 pb-[2px] pl-[10px] shadow-[0_0_40px_rgba(0,0,0,0.45)]">
        <div className="flex min-w-0 flex-1 flex-col overflow-hidden bg-[#e0e0e0]">
          <Header />
          <Ribbon />
          <div className="flex min-h-0 flex-1 pt-[1px]">
            <ProjectBrowser />
            <div className="ml-2 w-[230px] shrink-0 border border-[#c0c0c0] bg-[#f2f2f2]" />
            <span className="w-2 shrink-0 bg-[#d0d0d0]" />
            <Workspace />
            <div className="flex w-[41px] shrink-0 justify-between bg-[#dcdcdc] pt-[9px] text-[#444]">
              <span className="pl-[5px] [writing-mode:vertical-rl]">Start</span>
              <span className="h-[37px] w-2 bg-[#c9c9c9]" />
            </div>
          </div>
        </div>
        <Dialog />
        <PlayerControls />
      </div>
    </div>
  );
}
